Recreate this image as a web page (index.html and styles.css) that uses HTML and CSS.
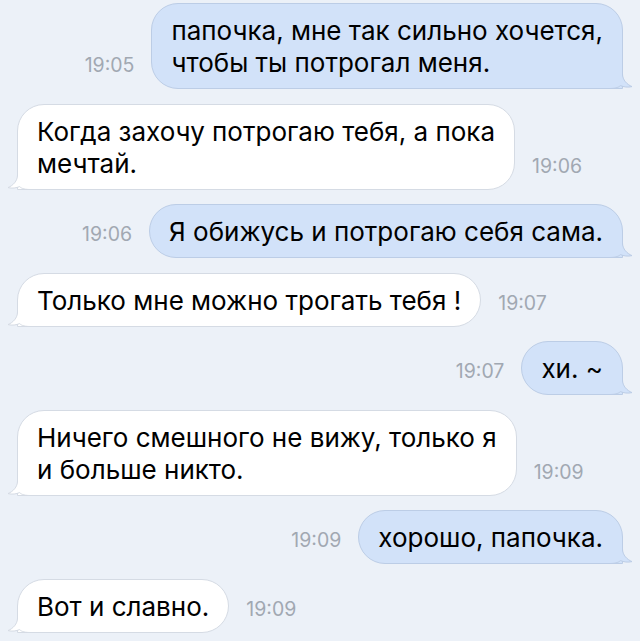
FILE: index.html
```html
<!DOCTYPE html>
<html lang="ru">
<head>
    <meta charset="UTF-8">
    <meta name="viewport" content="width=device-width, initial-scale=1.0">
    <title>Переписка</title>
    <link rel="stylesheet" href="styles.css">
</head>
<body>
    <div class="chat">
        <div class="row out">
            <span class="time">19:05</span>
            <div class="bubble">папочка, мне так сильно хочется,<br>чтобы ты потрогал меня.
                <svg class="tail" viewBox="0 0 24 20"><path class="tail-fill" d="M10.5 0V5C10.5 11 6 15.5 1 17.6C5 18.6 9.5 18 12.5 16.6C15 18.8 18 19.5 24 19.5V0Z"/><path class="tail-line" d="M10.5 0V5C10.5 11 6 15.5 1 17.6C5 18.6 9.5 18 12.5 16.6C15 18.8 18 19.5 24 19.5"/></svg>
            </div>
        </div>
        <div class="row in">
            <div class="bubble">Когда захочу потрогаю тебя, а пока<br>мечтай.
                <svg class="tail" viewBox="0 0 24 20"><path class="tail-fill" d="M10.5 0V5C10.5 11 6 15.5 1 17.6C5 18.6 9.5 18 12.5 16.6C15 18.8 18 19.5 24 19.5V0Z"/><path class="tail-line" d="M10.5 0V5C10.5 11 6 15.5 1 17.6C5 18.6 9.5 18 12.5 16.6C15 18.8 18 19.5 24 19.5"/></svg>
            </div>
            <span class="time">19:06</span>
        </div>
        <div class="row out">
            <span class="time">19:06</span>
            <div class="bubble">Я обижусь и потрогаю себя сама.
                <svg class="tail" viewBox="0 0 24 20"><path class="tail-fill" d="M10.5 0V5C10.5 11 6 15.5 1 17.6C5 18.6 9.5 18 12.5 16.6C15 18.8 18 19.5 24 19.5V0Z"/><path class="tail-line" d="M10.5 0V5C10.5 11 6 15.5 1 17.6C5 18.6 9.5 18 12.5 16.6C15 18.8 18 19.5 24 19.5"/></svg>
            </div>
        </div>
        <div class="row in">
            <div class="bubble">Только мне можно трогать тебя !
                <svg class="tail" viewBox="0 0 24 20"><path class="tail-fill" d="M10.5 0V5C10.5 11 6 15.5 1 17.6C5 18.6 9.5 18 12.5 16.6C15 18.8 18 19.5 24 19.5V0Z"/><path class="tail-line" d="M10.5 0V5C10.5 11 6 15.5 1 17.6C5 18.6 9.5 18 12.5 16.6C15 18.8 18 19.5 24 19.5"/></svg>
            </div>
            <span class="time">19:07</span>
        </div>
        <div class="row out">
            <span class="time">19:07</span>
            <div class="bubble">хи. ~
                <svg class="tail" viewBox="0 0 24 20"><path class="tail-fill" d="M10.5 0V5C10.5 11 6 15.5 1 17.6C5 18.6 9.5 18 12.5 16.6C15 18.8 18 19.5 24 19.5V0Z"/><path class="tail-line" d="M10.5 0V5C10.5 11 6 15.5 1 17.6C5 18.6 9.5 18 12.5 16.6C15 18.8 18 19.5 24 19.5"/></svg>
            </div>
        </div>
        <div class="row in">
            <div class="bubble">Ничего смешного не вижу, только я<br>и больше никто.
                <svg class="tail" viewBox="0 0 24 20"><path class="tail-fill" d="M10.5 0V5C10.5 11 6 15.5 1 17.6C5 18.6 9.5 18 12.5 16.6C15 18.8 18 19.5 24 19.5V0Z"/><path class="tail-line" d="M10.5 0V5C10.5 11 6 15.5 1 17.6C5 18.6 9.5 18 12.5 16.6C15 18.8 18 19.5 24 19.5"/></svg>
            </div>
            <span class="time">19:09</span>
        </div>
        <div class="row out">
            <span class="time">19:09</span>
            <div class="bubble">хорошо, папочка.
                <svg class="tail" viewBox="0 0 24 20"><path class="tail-fill" d="M10.5 0V5C10.5 11 6 15.5 1 17.6C5 18.6 9.5 18 12.5 16.6C15 18.8 18 19.5 24 19.5V0Z"/><path class="tail-line" d="M10.5 0V5C10.5 11 6 15.5 1 17.6C5 18.6 9.5 18 12.5 16.6C15 18.8 18 19.5 24 19.5"/></svg>
            </div>
        </div>
        <div class="row in">
            <div class="bubble">Вот и славно.
                <svg class="tail" viewBox="0 0 24 20"><path class="tail-fill" d="M10.5 0V5C10.5 11 6 15.5 1 17.6C5 18.6 9.5 18 12.5 16.6C15 18.8 18 19.5 24 19.5V0Z"/><path class="tail-line" d="M10.5 0V5C10.5 11 6 15.5 1 17.6C5 18.6 9.5 18 12.5 16.6C15 18.8 18 19.5 24 19.5"/></svg>
            </div>
            <span class="time">19:09</span>
        </div>
    </div>
</body>
</html>
```

FILE: styles.css
```css
*{
    margin: 0;
    padding: 0;
    box-sizing: border-box;
}
body{
    background-color: #ecf1f8;
    font-family: "Inter", "Liberation Sans", sans-serif;
    color: #000;
}
.chat{
    display: flex;
    flex-direction: column;
    gap: 14.5px;
    padding: 3px 17px 0;
}
.row{
    display: flex;
    align-items: flex-end;
    gap: 17px;
}
.row.out{
    justify-content: flex-end;
}
.bubble{
    position: relative;
    font-size: 26px;
    line-height: 32px;
    padding: 11px 19px 9px;
    border: 1px solid #d5dbe4;
    border-radius: 27px;
    background-color: #fff;
    white-space: nowrap;
}
.in .bubble{
    border-bottom-left-radius: 0;
}
.out .bubble{
    background-color: #d2e2f9;
    border-color: #bccde6;
    border-bottom-right-radius: 0;
}
.time{
    font-size: 19.5px;
    line-height: 20px;
    color: #a1a8b2;
    padding-bottom: 14px;
}
.tail{
    position: absolute;
    bottom: -1px;
    width: 24px;
    height: 20px;
}
.in .tail{
    left: -11px;
}
.out .tail{
    right: -11px;
    transform: scaleX(-1);
}
.tail-fill{
    fill: #fff;
}
.tail-line{
    fill: none;
    stroke: #d5dbe4;
    stroke-width: 1;
}
.out .tail-fill{
    fill: #d2e2f9;
}
.out .tail-line{
    stroke: #bccde6;
}
```
